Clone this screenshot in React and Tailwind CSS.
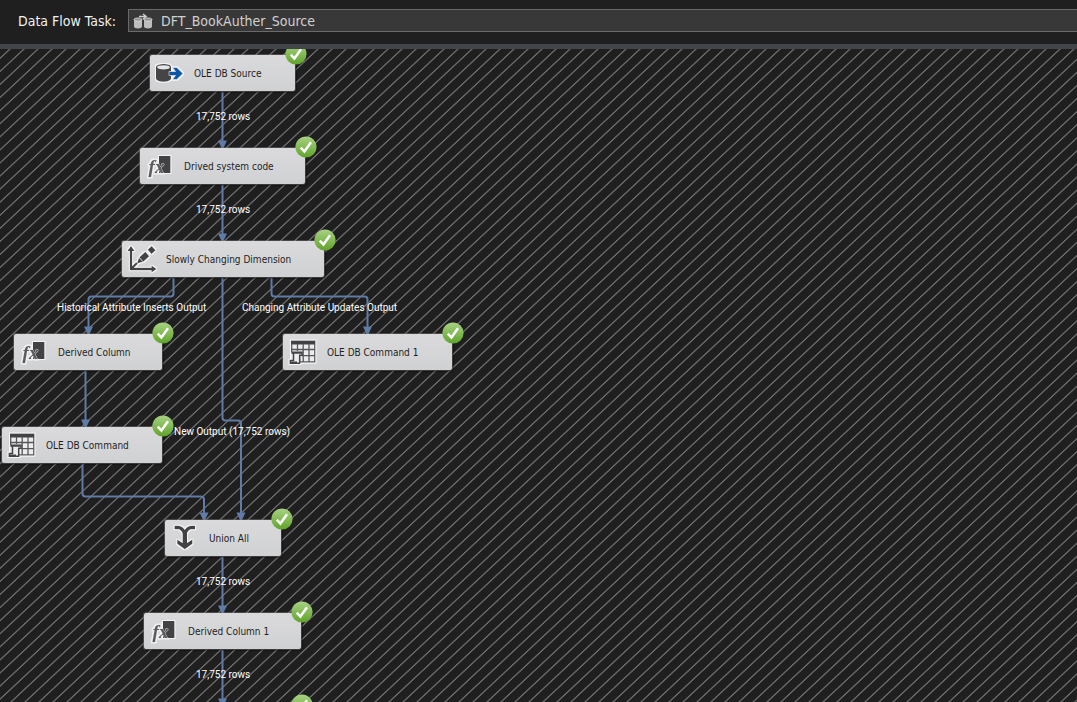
import React from "react";

const FONT = "font-['DejaVu_Sans_Condensed','DejaVu_Sans',sans-serif]";

function Icon({ children }) {
  return (
    <svg viewBox="0 0 32 32" className="size-8 shrink-0" aria-hidden="true">
      <g filter="url(#halo)">{children}</g>
    </svg>
  );
}

function SourceIcon() {
  return (
    <Icon>
      <path d="M2 10.5v11c0 1.9 3.4 3.2 7.5 3.2s7.500-1.300 7.500-3.200v-11z" fill="#444446" />
      <ellipse cx="9.500" cy="10.300" rx="7" ry="2.700" fill="#e6e6e8" stroke="#444446" strokeWidth="1.200" />
      <path d="M15 14.500h6.500l-3-4h4.300l6.200 6-6.200 6h-4.300l3-4H15z" fill="#0a56a5" stroke="#f2f2f2" strokeWidth=".6" />
    </Icon>
  );
}

function DerivedIcon() {
  return (
    <Icon>
      <rect x="15" y="6" width="11.500" height="17" fill="#434345" />
      <g
        className="font-['Liberation_Serif',serif] italic"
        fill="#5a5a5c"
        stroke="#dcdcde"
        strokeWidth=".8"
        paintOrder="stroke"
      >
        <text x="4.500" y="23" fontSize="19" fontWeight="700">
          f
        </text>
        <text x="11" y="23" fontSize="19" fontWeight="700">
          x
        </text>
      </g>
    </Icon>
  );
}

function DimensionIcon() {
  return (
    <Icon>
      <path d="M5 6v20h22M5 26l6-6" fill="none" stroke="#434345" strokeWidth="2.300" />
      <path d="M5 3l3.600 5H1.400zM30.500 26l-5 3.600v-7.200z" fill="#434345" />
      <path d="M11 20.500l2-5.700 4 4z" fill="#434345" />
      <path d="M15.300 16.500l6-5.500M23.600 8.800l4-3.600" stroke="#434345" strokeWidth="5.800" fill="none" />
    </Icon>
  );
}

function CommandIcon() {
  return (
    <Icon>
      <rect x="4" y="5" width="24" height="21.500" fill="#ececee" />
      <path d="M4 4.500h24.500v4H4z" fill="#434345" />
      <path
        d="M4.700 8v8M10.500 8v7M16.200 8v18M22 8v18M27.800 8v18.500M4 13.500h24M15 19.700h13M13 25.800h15.500"
        stroke="#57575a"
        strokeWidth="1.300"
        fill="none"
      />
      <path
        d="M5.500 16.200h9.500v3h-2.300v8H3.200v-2.600h3.300v-6.200z"
        fill="#ececee"
        stroke="#434345"
        strokeWidth="1.500"
      />
      <path d="M3 25.500h7v2.200H3zM4.500 16h10v1.800h-10z" fill="#434345" />
    </Icon>
  );
}

function UnionIcon() {
  return (
    <Icon>
      <path
        d="M5.500 5.500H9c3.600 0 5.500 3 6.800 6M26 5.500h-3.500c-3.600 0-5.400 3-6.700 6"
        fill="none"
        stroke="#434345"
        strokeWidth="3.600"
      />
      <path d="M13.600 9.500h4.400V21l5.400-3.500v4.200L15.800 27.300l-7.600-5.600v-4.200l5.400 3.500z" fill="#434345" />
    </Icon>
  );
}

function CheckBadge({ className }) {
  return (
    <svg viewBox="0 0 22 22" className={`absolute size-[22px] ${className}`} role="img" aria-label="Succeeded">
      <circle cx="11" cy="11" r="10.600" fill="url(#green)" />
      <path d="M5.800 11.600l3.600 3.900 6.600-9.200" fill="none" stroke="#fff" strokeWidth="2.500" />
    </svg>
  );
}

const nodes = [
  { label: "OLE DB Source", icon: SourceIcon, place: "left-[150px] top-[6px] w-[145px]" },
  { label: "Drived system code", icon: DerivedIcon, place: "left-[140px] top-[99px] w-[165px]" },
  { label: "Slowly Changing Dimension", icon: DimensionIcon, place: "left-[122px] top-[192px] w-[202px]" },
  { label: "Derived Column", icon: DerivedIcon, place: "left-[14px] top-[285px] w-[148px]" },
  { label: "OLE DB Command 1", icon: CommandIcon, place: "left-[283px] top-[285px] w-[169px]" },
  { label: "OLE DB Command", icon: CommandIcon, place: "left-[2px] top-[378px] w-[160px]" },
  { label: "Union All", icon: UnionIcon, place: "left-[165px] top-[471px] w-[116px]" },
  { label: "Derived Column 1", icon: DerivedIcon, place: "left-[144px] top-[564px] w-[157px]" },
];

const edgeLabels = [
  { text: "17,752 rows", place: "left-[196px] top-[60px]" },
  { text: "17,752 rows", place: "left-[196px] top-[153px]" },
  { text: "Historical Attribute Inserts Output", place: "left-[57px] top-[251px]" },
  { text: "Changing Attribute Updates Output", place: "left-[242px] top-[251px]" },
  { text: "New Output (17,752 rows)", place: "left-[174px] top-[375px]" },
  { text: "17,752 rows", place: "left-[196px] top-[525px]" },
  { text: "17,752 rows", place: "left-[196px] top-[618px]" },
];

const edges = [
  "M222.500 43V94",
  "M222.500 136V187",
  "M173.500 229V244.500Q173.500 247.500 170.500 247.500H91.500Q88.500 247.500 88.500 250.500V280",
  "M271.500 229V244.500Q271.500 247.500 274.500 247.500H364.500Q367.500 247.500 367.500 250.500V280",
  "M222.500 229V368.500Q222.500 371.500 225.500 371.500H238Q241 371.500 241 374.500V466",
  "M85.500 322V373",
  "M82.500 415V444.500Q82.500 447.500 85.500 447.500H201Q204 447.500 204 450.500V466",
  "M222.500 508V559",
  "M222.500 601V652",
];

const arrowTips = [
  [222.5, 99],
  [222.5, 192],
  [88.5, 285],
  [367.5, 285],
  [241, 471],
  [85.5, 378],
  [204, 471],
  [222.5, 564],
  [222.5, 657],
];

function Canvas() {
  return (
    <main className="relative min-h-0 flex-1 overflow-hidden bg-[#1f1f1f]">
      <svg className="absolute inset-0 size-full" aria-hidden="true">
        <defs>
          <pattern id="hatch" width="14" height="14" patternUnits="userSpaceOnUse" patternTransform="skewX(-46.95)">
            <path d="M10 -1V15" stroke="#a4a4a4" strokeWidth="1.100" />
          </pattern>
          <linearGradient id="green" x1="0" y1="0" x2="0" y2="1">
            <stop offset="0" stopColor="#a9d283" />
            <stop offset="1" stopColor="#5fa32a" />
          </linearGradient>
          <filter id="halo" x="-20%" y="-20%" width="140%" height="140%">
            <feMorphology in="SourceAlpha" operator="dilate" radius="1.200" result="grown" />
            <feFlood floodColor="#f4f4f5" />
            <feComposite in2="grown" operator="in" result="edge" />
            <feMerge>
              <feMergeNode in="edge" />
              <feMergeNode in="SourceGraphic" />
            </feMerge>
          </filter>
        </defs>
        <rect width="100%" height="100%" fill="url(#hatch)" />
        {edges.map((d) => (
          <path key={d} d={d} fill="none" stroke="#5f7ba6" strokeWidth="2" />
        ))}
        {arrowTips.map(([x, y]) => (
          <path key={`${x} ${y}`} d={`M${x - 4.5} ${y - 7.5}h9l-3.5 7.500h-2z`} fill="#5f7ba6" />
        ))}
      </svg>
      {nodes.map(({ label, icon: NodeIcon, place }) => (
        <div
          key={label}
          className={`absolute flex h-9 items-center gap-2 rounded-xs bg-linear-to-b from-[#dadadc] to-[#d0d1d3] pl-1 shadow-[0_0_0_1px_#8a8a8c66,1px_1px_2px_#000] ${place}`}
        >
          <NodeIcon />
          <span className="pt-0.5 text-[10px] leading-4 whitespace-nowrap text-[#1e1e1e]">{label}</span>
          <CheckBadge className="-top-3 -right-3" />
        </div>
      ))}
      <CheckBadge className="top-[645px] left-[291px]" />
      {edgeLabels.map(({ text, place }) => (
        <span
          key={place}
          className={`absolute font-['Roboto',sans-serif] text-[10px] leading-4 whitespace-nowrap text-white ${place}`}
        >
          {text}
        </span>
      ))}
    </main>
  );
}

function TaskIcon() {
  return (
    <svg viewBox="0 0 20 16" className="h-4 w-5 shrink-0" aria-hidden="true">
      <path d="M1 6v7.500c0 1.200 1.800 2 4 2s4-.8 4-2V6zM11 6v7.500c0 1.200 1.800 2 4 2s4-.8 4-2V6z" fill="#bdbdbd" />
      <path d="M1 6.500c0-2 8-2 8 0s-8 2-8 0zM11 6.500c0-2 8-2 8 0s-8 2-8 0z" fill="#8f8f8f" stroke="#dedede" strokeWidth=".8" />
      <path d="M6 3.500h6M10 1l3.300 2.500L10 6" fill="none" stroke="#d0d0d0" strokeWidth="1.300" />
    </svg>
  );
}

export default function App() {
  return (
    <div className={`flex h-screen flex-col overflow-hidden bg-[#1f1f1f] ${FONT}`}>
      <header className="flex h-[49px] shrink-0 items-start border-b-[5px] border-[#424549] pt-[9px] pl-[18px]">
        <label htmlFor="task" className="w-[110px] shrink-0 text-sm leading-6 whitespace-nowrap text-[#f1f1f1]">
          Data Flow Task:
        </label>
        <div className="flex h-[23px] min-w-0 flex-1 items-center gap-2 border border-r-0 border-[#6a6a6a] bg-[#383838] pl-1">
          <TaskIcon />
          <input
            id="task"
            defaultValue="DFT_BookAuther_Source"
            className="h-full min-w-0 flex-1 bg-transparent text-sm text-[#d0d0d0] outline-none"
          />
        </div>
      </header>
      <Canvas />
    </div>
  );
}
